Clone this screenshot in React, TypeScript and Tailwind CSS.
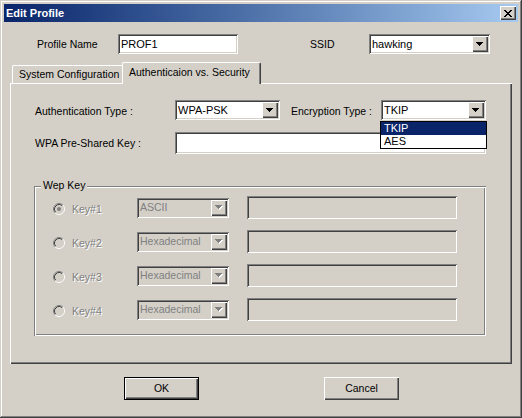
import type { ReactNode } from 'react'

// classic 3D edges
const sunken =
  'shadow-[inset_1px_1px_#808080,inset_-1px_-1px_#ffffff,inset_2px_2px_#404040,inset_-2px_-2px_#d4d0c8]'
const raised =
  'shadow-[inset_1px_1px_#ffffff,inset_-1px_-1px_#404040,inset_-2px_-2px_#808080]'
const etched =
  'shadow-[inset_1px_1px_#808080,inset_-1px_-1px_#ffffff,inset_2px_2px_#ffffff,inset_-2px_-2px_#808080]'

function Arrow({ disabled }: { disabled?: boolean }) {
  return (
    <svg width="8" height="5" viewBox="0 0 8 5" shapeRendering="crispEdges">
      {disabled && (
        <path d="M1 1h7v1H1zM2 2h5v1H2zM3 3h3v1H3zM4 4h1v1H4z" fill="#ffffff" />
      )}
      <path
        d="M0 0h7v1H0zM1 1h5v1H1zM2 2h3v1H2zM3 3h1v1H3z"
        fill={disabled ? '#808080' : '#000000'}
      />
    </svg>
  )
}

function Combo({
  value,
  className,
  disabled,
  children,
}: {
  value: string
  className: string
  disabled?: boolean
  children?: ReactNode
}) {
  return (
    <div
      className={`relative flex h-[20px] p-[2px] ${sunken} ${
        disabled ? 'bg-[#d4d0c8] text-[#808080]' : 'bg-white text-black'
      } ${className}`}
    >
      <div className="flex flex-1 items-center whitespace-nowrap pl-[1px]">{value}</div>
      <div
        className={`flex h-[16px] w-[16px] items-center justify-center bg-[#d4d0c8] ${raised}`}
      >
        <Arrow disabled={disabled} />
      </div>
      {children}
    </div>
  )
}

function TextBox({ value, className }: { value?: string; className: string }) {
  return (
    <div className={`flex items-center bg-white pl-[3px] text-black ${sunken} ${className}`}>
      {value}
    </div>
  )
}

function Radio({ checked }: { checked?: boolean }) {
  return (
    <svg width="12" height="12" viewBox="0 0 12 12">
      <circle cx="6" cy="6" r="5" fill="#d4d0c8" />
      <path d="M2.11 9.89A5.5 5.5 0 0 1 9.89 2.11" fill="none" stroke="#808080" />
      <path d="M9.89 2.11A5.5 5.5 0 0 1 2.11 9.89" fill="none" stroke="#ffffff" />
      <path d="M2.82 9.18A4.5 4.5 0 0 1 9.18 2.82" fill="none" stroke="#404040" />
      <path d="M9.18 2.82A4.5 4.5 0 0 1 2.82 9.18" fill="none" stroke="#d4d0c8" />
      {checked && <circle cx="6" cy="6" r="2" fill="#808080" />}
    </svg>
  )
}

function KeyRow({ label, format, checked }: { label: string; format: string; checked?: boolean }) {
  return (
    <div className="flex h-[23px] items-center">
      <div className="ml-[19px] mt-[3px] flex">
        <Radio checked={checked} />
      </div>
      <span className="ml-[7px] mt-[3px] w-[65px] text-[#808080] [text-shadow:1px_1px_#ffffff]">
        {label}
      </span>
      <Combo value={format} disabled className="w-[92px]" />
      <div className={`ml-[18px] h-[23px] w-[210px] bg-[#d4d0c8] ${sunken}`} />
    </div>
  )
}

function CloseGlyph() {
  return (
    <svg width="8" height="7" viewBox="0 0 8 7" shapeRendering="crispEdges">
      <path
        d="M0 0h2v1H0zM6 0h2v1H6zM1 1h2v1H1zM5 1h2v1H5zM2 2h4v1H2zM3 3h2v1H3zM2 4h4v1H2zM1 5h2v1H1zM5 5h2v1H5zM0 6h2v1H0zM6 6h2v1H6z"
        fill="#000000"
      />
    </svg>
  )
}

export default function App() {
  return (
    <div
      className={`flex h-[418px] w-[522px] flex-col bg-[#d4d0c8] p-[4px] font-['Liberation_Sans',Arial,sans-serif] text-[10.5px] leading-none text-black shadow-[inset_-1px_-1px_#404040,inset_1px_1px_#d4d0c8,inset_-2px_-2px_#808080,inset_2px_2px_#ffffff]`}
    >
      {/* title bar */}
      <div className="flex h-[18px] items-center justify-between bg-gradient-to-r from-[#0a246a] to-[#a6caf0] pl-[2px] pr-[2px]">
        <span className="text-[11px] font-bold text-white">Edit Profile</span>
        <div className={`flex h-[14px] w-[16px] items-center justify-center bg-[#d4d0c8] ${raised}`}>
          <CloseGlyph />
        </div>
      </div>

      {/* profile name / ssid */}
      <div className="mt-[12px] flex h-[20px] items-center pl-[33px]">
        <span className="w-[81px]">Profile Name</span>
        <TextBox value="PROF1" className="h-[20px] w-[120px] text-[11px]" />
        <span className="ml-[72px] w-[59px]">SSID</span>
        <Combo value="hawking" className="w-[121px] text-[11px]" />
      </div>

      {/* tabs */}
      <div className="ml-[6px] mt-[8px] w-[502px]">
        <div className="flex h-[21px] items-end pl-[2px]">
          <div className="flex h-[18px] w-[110px] items-center whitespace-nowrap rounded-tl-[2px] border-l border-t border-white pl-[6px]">
            System Configuration
          </div>
          <div className="relative z-10 -mb-px flex h-[22px] w-[139px] items-center whitespace-nowrap rounded-t-[2px] border-l border-r border-t border-l-white border-r-[#404040] border-t-white bg-[#d4d0c8] pb-[2px] pl-[6px] shadow-[inset_-1px_0_#808080]">
            Authenticaion vs. Security
          </div>
        </div>

        <div className={`relative flex h-[281px] flex-col pl-[25px] pt-[17px] ${raised}`}>
          <div className="flex h-[20px] items-center">
            <span className="mt-[3px] w-[140px] whitespace-nowrap">Authentication Type :</span>
            <Combo value="WPA-PSK" className="w-[105px] text-[11px]" />
            <span className="ml-[11px] mt-[3px] w-[90px] whitespace-nowrap">Encryption Type :</span>
            <Combo value="TKIP" className="w-[105px] text-[11px]">
              <div className="absolute left-[-1px] top-[21px] z-20 w-[107px] border border-black bg-white">
                <div className="flex h-[13px] items-center bg-[#0a246a] pl-[3px] text-white">TKIP</div>
                <div className="flex h-[13px] items-center pl-[3px]">AES</div>
              </div>
            </Combo>
          </div>

          <div className="mt-[12px] flex h-[22px] items-center">
            <span className="w-[140px] whitespace-nowrap">WPA Pre-Shared Key :</span>
            <TextBox className="h-[22px] w-[311px]" />
          </div>

          <div className={`relative -ml-px mt-[32px] h-[150px] w-[452px] ${etched}`}>
            <span className="absolute left-[7px] top-[-6px] bg-[#d4d0c8] px-[2px]">Wep Key</span>
            <div className="flex flex-col gap-[11px] pt-[10px]">
              <KeyRow label="Key#1" format="ASCII" checked />
              <KeyRow label="Key#2" format="Hexadecimal" />
              <KeyRow label="Key#3" format="Hexadecimal" />
              <KeyRow label="Key#4" format="Hexadecimal" />
            </div>
          </div>
        </div>
      </div>

      {/* dialog buttons */}
      <div className="mt-[13px] flex h-[23px]">
        <div className="ml-[120px] w-[75px] border border-black">
          <div className={`flex h-full items-center justify-center ${raised}`}>OK</div>
        </div>
        <div className={`ml-[125px] flex w-[75px] items-center justify-center ${raised}`}>
          Cancel
        </div>
      </div>
    </div>
  )
}
